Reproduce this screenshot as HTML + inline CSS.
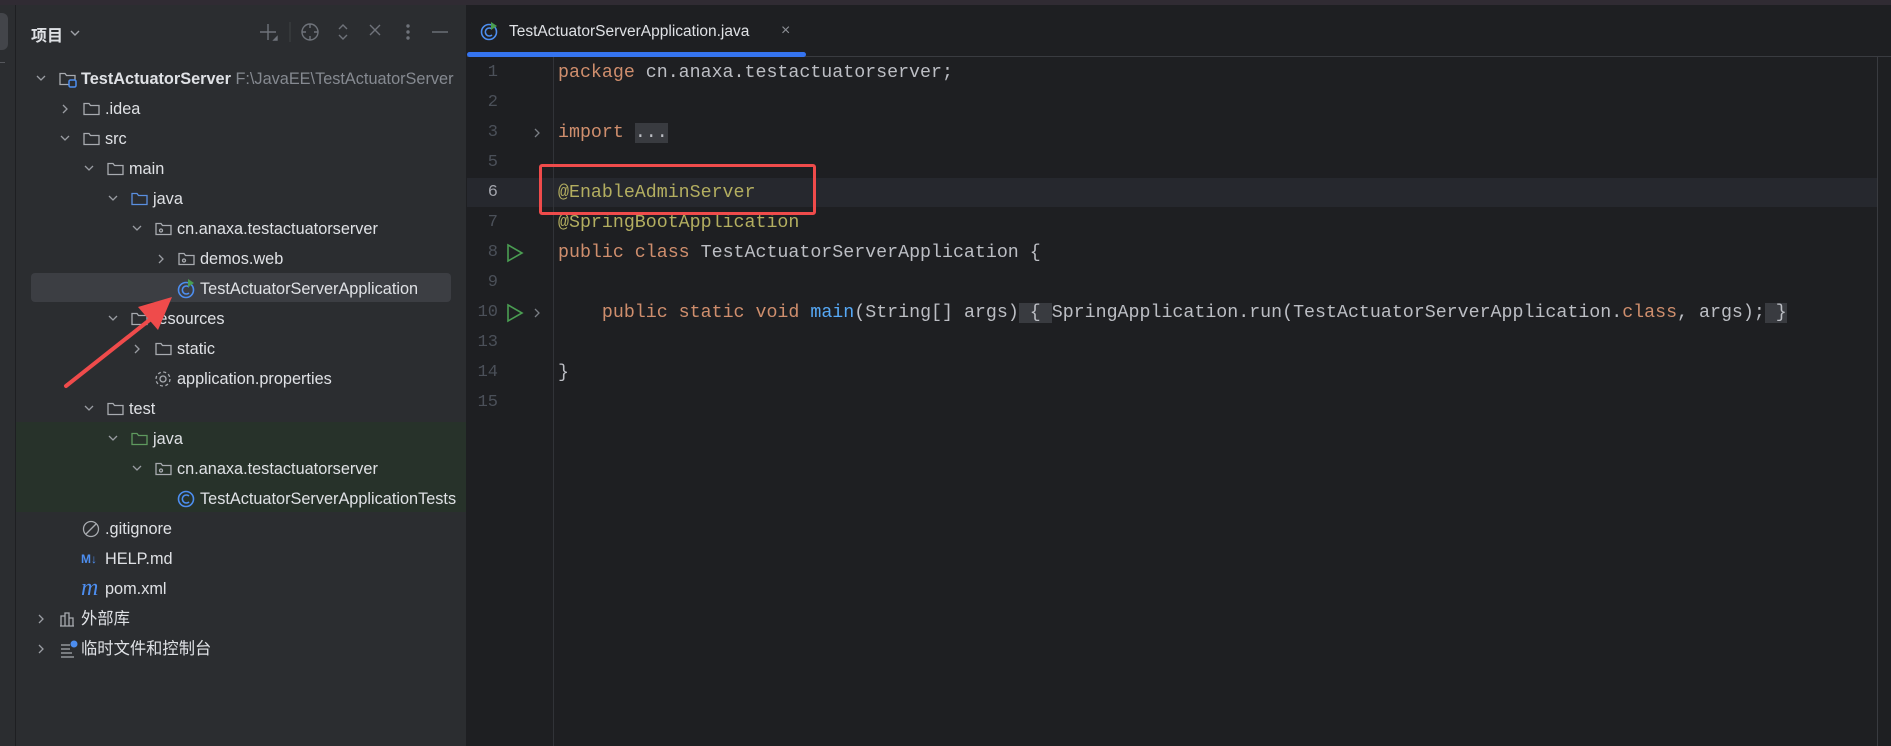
<!DOCTYPE html>
<html><head><meta charset="utf-8">
<style>
*{margin:0;padding:0;box-sizing:border-box}
body{width:1891px;height:746px;overflow:hidden;background:#1e1f22;position:relative;font-family:"Liberation Sans","Noto Sans CJK SC",sans-serif}
.a{position:absolute}
.row{position:absolute;height:30px;line-height:30px;font-size:16.3px;color:#dfe1e5;white-space:nowrap}
.code{position:absolute;left:558px;font-family:"Liberation Mono",monospace;font-size:18.3px;color:#bcbec4;white-space:pre;line-height:30px;height:30px}
.ln{position:absolute;width:40px;left:458px;text-align:right;font-family:"Liberation Mono",monospace;font-size:17px;color:#4b5059;line-height:30px}
.k{color:#cf8e6d}.an{color:#b3ae60}.m{color:#56a8f5}
.fold{background:#393b40}
</style></head><body>
<div class="a" style="left:0;top:0;width:1891px;height:5px;background:#302b33"></div>
<div class="a" style="left:0;top:5px;width:15px;height:741px;background:#2b2d30"></div>
<div class="a" style="left:0;top:13px;width:8px;height:37px;background:#43454a;border-radius:0 6px 6px 0"></div>
<div class="a" style="left:0;top:62px;width:5px;height:1px;background:#55575c"></div>
<div class="a" style="left:15px;top:5px;width:1px;height:741px;background:#1e1f22"></div>
<div class="a" style="left:16px;top:5px;width:450px;height:741px;background:#2b2d30"></div>
<div class="a" style="left:466px;top:5px;width:1px;height:741px;background:#1e1f22"></div>
<div class="a" style="left:31px;top:22px;font-size:16px;font-weight:bold;color:#dfe1e5">项目</div>
<svg class="a" style="left:68px;top:26px" width="14" height="14"><path d="M3 5l4 4 4-4" fill="none" stroke="#a0a2a8" stroke-width="1.4"/></svg>
<svg class="a" style="left:258px;top:20px" width="210" height="24" fill="none" stroke="#6f737a" stroke-width="1.4">
<path d="M10 4v16M2 12h16"/><path d="M19 17v3h-3z" fill="#6f737a"/>
<path d="M32 2v20" stroke="#3a3c40"/>
<circle cx="52" cy="12" r="8"/><path d="M52 4v4M52 16v4M44 12h4M56 12h4"/>
<path d="M81 9l4-4 4 4M81 15l4 4 4-4"/>
<path d="M112 5l10 10M122 5l-10 10"/>
<circle cx="150" cy="6" r="1" fill="#6f737a"/><circle cx="150" cy="12" r="1" fill="#6f737a"/><circle cx="150" cy="18" r="1" fill="#6f737a"/>
<path d="M174 12h16"/>
</svg>
<div class="a" style="left:31px;top:273px;width:420px;height:29px;background:#3c3e43;border-radius:4px"></div>
<div class="a" style="left:16px;top:422px;width:450px;height:90px;background:#27322a"></div>

<svg class="a" style="left:0;top:0" width="466" height="746" fill="none" stroke-width="1.3">
<defs>
<g id="fd"><path d="M1 3.5h5l1.5 2H16v9H1z" stroke="#a8abb0"/></g>
<g id="fdb"><path d="M1 3.5h5l1.5 2H16v9H1z" stroke="#5a8fe0"/></g>
<g id="fdg"><path d="M1 3.5h5l1.5 2H16v9H1z" stroke="#5f9a5f"/></g>
<g id="pk"><path d="M1 3.5h5l1.5 2H16v9H1z" stroke="#a8abb0"/><circle cx="6" cy="10.5" r="1.5" stroke="#a8abb0"/></g>
<path id="cd" d="M-4 -2l4 4 4-4" stroke="#9a9da3"/>
<path id="cr" d="M-2 -4l4 4-4 4" stroke="#9a9da3"/>
</defs>
<use href="#cd" x="41" y="78"/>
<use href="#cr" x="65" y="109"/>
<use href="#cd" x="65" y="138"/>
<use href="#cd" x="89" y="168"/>
<use href="#cd" x="113" y="198"/>
<use href="#cd" x="137" y="228"/>
<use href="#cr" x="161" y="259"/>
<use href="#cd" x="113" y="318"/>
<use href="#cr" x="137" y="349"/>
<use href="#cd" x="89" y="408"/>
<use href="#cd" x="113" y="438"/>
<use href="#cd" x="137" y="468"/>
<use href="#cr" x="41" y="619"/>
<use href="#cr" x="41" y="649"/>
<g transform="translate(59,70)"><path d="M1 3.5h5l1.5 2H16v9H1z" stroke="#a8abb0"/><rect x="10" y="10" width="7" height="7" rx="1.5" stroke="#4d8ef0" stroke-width="1.5" fill="#2b2d30"/></g>
<use href="#fd" x="83" y="100"/>
<use href="#fd" x="83" y="130"/>
<use href="#fd" x="107" y="160"/>
<use href="#fdb" x="131" y="190"/>
<use href="#pk" x="155" y="220"/>
<use href="#pk" x="178" y="250"/>
<use href="#fd" x="131" y="310"/>
<use href="#fd" x="155" y="340"/>
<use href="#fd" x="107" y="400"/>
<use href="#fdg" x="131" y="430"/>
<use href="#pk" x="155" y="460"/>
<circle cx="186" cy="290" r="7.5" stroke="#4d8ef0" stroke-width="1.6"/>
<path d="M189 287a4 4 0 1 0 0 6" stroke="#4d8ef0" stroke-width="1.6"/>
<path d="M188 279l6 4-6 4z" fill="#4a9d52" stroke="none"/>
<circle cx="163" cy="379" r="3" stroke="#a8abb0"/>
<circle cx="163" cy="379" r="7" stroke="#a8abb0" stroke-dasharray="3 2.5"/>
<circle cx="186" cy="499" r="7.5" stroke="#4d8ef0" stroke-width="1.6"/>
<path d="M189 496a4 4 0 1 0 0 6" stroke="#4d8ef0" stroke-width="1.6"/>
<circle cx="91" cy="529" r="7.5" stroke="#a8abb0"/><path d="M86 534l10-10" stroke="#a8abb0"/>
<path d="M61 626v-10h4v10M65 626v-13h4v13M69 626v-8h4v8M60 626h14" stroke="#a8abb0"/>
<path d="M61 645h9M61 649h9M61 653h11M61 657h13" stroke="#a8abb0"/><circle cx="74" cy="644" r="3.5" fill="#4d8ef0" stroke="none"/>
</svg>
<div class="a" style="left:81px;top:548px;font-size:12px;font-weight:bold;color:#4d8ef0;line-height:22px">M↓</div>
<div class="a" style="left:81px;top:574px;font-size:24px;font-style:italic;color:#4d8ef0;font-family:'Liberation Serif',serif;line-height:28px">m</div>

<div class="row" style="left:81px;top:64px"><b>TestActuatorServer</b> <span style="color:#868a91">F:\JavaEE\TestActuatorServer</span></div>
<div class="row" style="left:105px;top:94px">.idea</div>
<div class="row" style="left:105px;top:124px">src</div>
<div class="row" style="left:129px;top:154px">main</div>
<div class="row" style="left:153px;top:184px">java</div>
<div class="row" style="left:177px;top:214px">cn.anaxa.testactuatorserver</div>
<div class="row" style="left:200px;top:244px">demos.web</div>
<div class="row" style="left:200px;top:274px">TestActuatorServerApplication</div>
<div class="row" style="left:153px;top:304px">resources</div>
<div class="row" style="left:177px;top:334px">static</div>
<div class="row" style="left:177px;top:364px">application.properties</div>
<div class="row" style="left:129px;top:394px">test</div>
<div class="row" style="left:153px;top:424px">java</div>
<div class="row" style="left:177px;top:454px">cn.anaxa.testactuatorserver</div>
<div class="row" style="left:200px;top:484px">TestActuatorServerApplicationTests</div>
<div class="row" style="left:105px;top:514px">.gitignore</div>
<div class="row" style="left:105px;top:544px">HELP.md</div>
<div class="row" style="left:105px;top:574px">pom.xml</div>
<div class="row" style="left:81px;top:604px">外部库</div>
<div class="row" style="left:81px;top:634px">临时文件和控制台</div>

<div class="a" style="left:467px;top:5px;width:1424px;height:51px;background:#1e1f22"></div>
<div class="a" style="left:467px;top:56px;width:1424px;height:1px;background:#393b40"></div>
<div class="a" style="left:1877px;top:57px;width:1px;height:689px;background:#393b40"></div>
<svg class="a" style="left:480px;top:21px" width="20" height="20" fill="none">
<circle cx="9" cy="11" r="7.5" stroke="#4d8ef0" stroke-width="1.6"/><path d="M12 8a4 4 0 1 0 0 6" stroke="#4d8ef0" stroke-width="1.6"/><path d="M11 1l6 4-6 4z" fill="#4a9d52"/></svg>
<div class="a" style="left:509px;top:21px;font-size:15.5px;color:#dfe1e5;line-height:22px">TestActuatorServerApplication.java</div>
<div class="a" style="left:781px;top:20px;font-size:16px;color:#8c8f95;line-height:22px">×</div>
<div class="a" style="left:467px;top:52px;width:339px;height:5px;background:#3574f0;border-radius:3px"></div>

<div class="a" style="left:467px;top:178px;width:1410px;height:29px;background:#26282e"></div>
<div class="a" style="left:553px;top:57px;width:1px;height:689px;background:#313338"></div>

<div class="ln" style="top:58px">1</div>
<div class="ln" style="top:88px">2</div>
<div class="ln" style="top:118px">3</div>
<div class="ln" style="top:148px">5</div>
<div class="ln" style="top:178px;color:#a1a3ab">6</div>
<div class="ln" style="top:208px">7</div>
<div class="ln" style="top:238px">8</div>
<div class="ln" style="top:268px">9</div>
<div class="ln" style="top:298px">10</div>
<div class="ln" style="top:328px">13</div>
<div class="ln" style="top:358px">14</div>
<div class="ln" style="top:388px">15</div>

<svg class="a" style="left:500px;top:0" width="50" height="746" fill="none">
<path d="M8 245l14 8-14 8z" stroke="#4a9d52" stroke-width="1.6"/>
<path d="M8 305l14 8-14 8z" stroke="#4a9d52" stroke-width="1.6"/>
<path d="M35 129l4 4-4 4" stroke="#7a7e85" stroke-width="1.3"/>
<path d="M35 309l4 4-4 4" stroke="#7a7e85" stroke-width="1.3"/>
</svg>

<div class="code" style="top:58px"><span class="k">package</span> cn.anaxa.testactuatorserver;</div>
<div class="code" style="top:118px"><span class="k">import</span> <span class="fold">...</span></div>
<div class="code" style="top:178px"><span class="an">@EnableAdminServer</span></div>
<div class="code" style="top:208px"><span class="an">@SpringBootApplication</span></div>
<div class="code" style="top:238px"><span class="k">public class</span> TestActuatorServerApplication {</div>
<div class="code" style="top:298px">    <span class="k">public static void</span> <span class="m">main</span>(String[] args)<span class="fold"> { </span>SpringApplication.run(TestActuatorServerApplication.<span class="k">class</span>, args);<span class="fold"> }</span></div>
<div class="code" style="top:358px">}</div>

<div class="a" style="left:539px;top:164px;width:277px;height:51px;border:3px solid #ef4b4b;border-radius:3px"></div>
<svg class="a" style="left:0;top:0" width="300" height="420">
<path d="M66 386L152 318" stroke="#ef4b4b" stroke-width="4" stroke-linecap="round"/>
<path d="M172 297L138 307L158 330Z" fill="#ef4b4b"/>
</svg>
</body></html>
